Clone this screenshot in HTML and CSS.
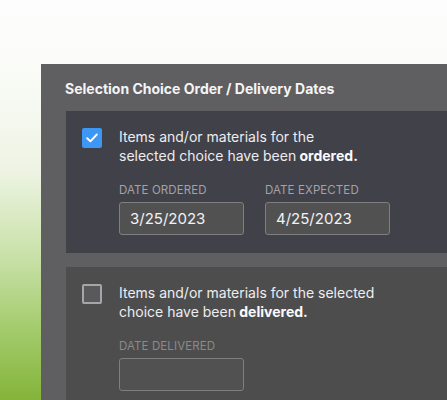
FILE: index.html
```html
<!DOCTYPE html>
<html>
<head>
<meta charset="utf-8">
<link rel="stylesheet" href="styles.css">
</head>
<body>
<div class="panel">
  <h2 class="title">Selection Choice Order / Delivery Dates</h2>
  <div class="card card-ordered">
    <span class="check checked">
      <svg width="12" height="10" viewBox="0 0 12 10"><path d="M1.2 5.2 L4.4 8.3 L10.8 1.5" fill="none" stroke="#fff" stroke-width="1.9" stroke-linecap="round" stroke-linejoin="round"/></svg>
    </span>
    <div class="body">
      <p class="desc desc-ordered">Items and/or materials for the selected choice have been<b> ordered.</b></p>
      <div class="fields">
        <div class="field">
          <div class="label">Date Ordered</div>
          <div class="input">3/25/2023</div>
        </div>
        <div class="field">
          <div class="label">Date Expected</div>
          <div class="input">4/25/2023</div>
        </div>
      </div>
    </div>
  </div>
  <div class="card card-delivered">
    <span class="check"></span>
    <div class="body">
      <p class="desc desc-delivered">Items and/or materials for the selected choice have been<b> delivered.</b></p>
      <div class="fields">
        <div class="field">
          <div class="label label-dim">Date Delivered</div>
          <div class="input"></div>
        </div>
      </div>
    </div>
  </div>
</div>
</body>
</html>
```

FILE: styles.css
```css
html, body {
  margin: 0;
  padding: 0;
}
body {
  width: 447px;
  height: 400px;
  overflow: hidden;
  box-sizing: border-box;
  padding: 64px 0 0 41px;
  font-family: Inter, "Noto Sans", sans-serif;
  background: linear-gradient(to bottom, #fdfdfd 0px, #fbfcf9 60px, #eef4e4 170px, #c7e0a6 260px, #a3cb6c 330px, #84b43a 400px);
}
.panel {
  background: #5f5f61;
  height: 336px;
  overflow: hidden;
  box-sizing: border-box;
  padding: 17px 0 0 25px;
}
.title {
  margin: 0 0 14px -1px;
  font-size: 14px;
  line-height: 16px;
  font-weight: 700;
  color: #f4f4f5;
}
.card {
  display: flex;
  gap: 17px;
  padding: 17px 0 18px 16px;
}
.card-ordered {
  background: #41414a;
}
.card-delivered {
  background: #4d4d4e;
  margin-top: 14px;
}
.check {
  flex: none;
  width: 20px;
  height: 20px;
  box-sizing: border-box;
  border-radius: 2px;
  border: 2px solid #a6a6a8;
  background: #59595b;
  display: flex;
  align-items: center;
  justify-content: center;
}
.check.checked {
  background: #3d97f4;
  border-color: #3d97f4;
}
.desc {
  margin: -1px 0 0;
  font-size: 14px;
  line-height: 19px;
  color: #ededee;
}
.desc b {
  font-weight: 700;
  color: #fafafa;
}
.desc-ordered {
  width: 246px;
}
.desc-delivered {
  width: 275px;
}
.fields {
  display: flex;
  gap: 21px;
  margin-top: 19px;
}
.label {
  font-size: 11.5px;
  line-height: 13px;
  text-transform: uppercase;
  color: #a2a2a8;
  margin-bottom: 5px;
  letter-spacing: 0.1px;
}
.label-dim {
  color: #8a8a8c;
}
.input {
  width: 125px;
  height: 33px;
  box-sizing: border-box;
  border: 1px solid #7f7f82;
  border-radius: 3px;
  background: #515152;
  color: #f2f2f2;
  font-size: 15px;
  line-height: 31px;
  padding-left: 10px;
}
```
